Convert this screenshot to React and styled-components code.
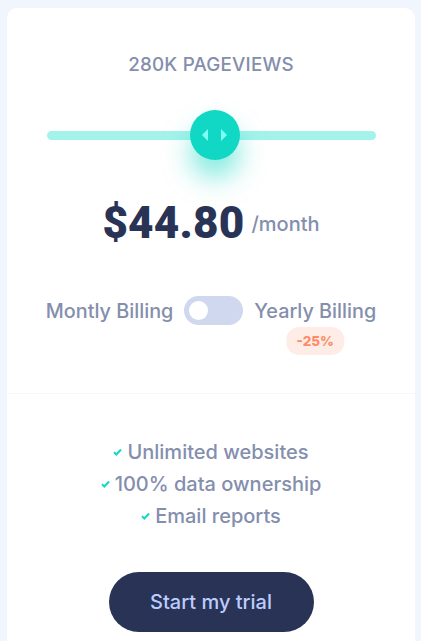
import React, { useState } from "react";
import styled, { createGlobalStyle } from "styled-components";

const GlobalStyle = createGlobalStyle`
  body {
    margin: 0;
    background: #f1f5fe;
    font-family: "Inter", "Liberation Sans", sans-serif;
  }
`;

const Page = styled.div`
  padding: 8px 6px 0 7px;
  height: 633px;
  overflow: hidden;
`;

const Card = styled.div`
  background: #ffffff;
  border-radius: 10px 10px 0 0;
  height: 700px;
`;

const Top = styled.div`
  display: flex;
  flex-direction: column;
  align-items: center;
  padding-top: 45px;
  height: 340px;
  border-bottom: 1px solid #f5f7fe;
`;

const Views = styled.h2`
  margin: 0;
  font-size: 18.8px;
  font-weight: 500;
  color: #848ead;
  letter-spacing: 0.2px;
`;

const SliderWrap = styled.div`
  position: relative;
  width: 329px;
  height: 50px;
  margin-top: 34px;
  display: flex;
  align-items: center;
`;

const Track = styled.div`
  width: 100%;
  height: 9px;
  border-radius: 5px;
  background: #a4f3eb;
`;

const Thumb = styled.div`
  position: absolute;
  left: ${(p) => p.pos}px;
  top: 0;
  width: 50px;
  height: 50px;
  border-radius: 50%;
  background: #10d8c4;
  box-shadow: 0 18px 26px rgba(16, 216, 196, 0.5);
  display: flex;
  align-items: center;
  justify-content: center;
  gap: 13px;
`;

const Arrow = styled.span`
  width: 0;
  height: 0;
  border-top: 6px solid transparent;
  border-bottom: 6px solid transparent;
  ${(p) =>
    p.dir === "left"
      ? "border-right: 6px solid #80fff3;"
      : "border-left: 6px solid #80fff3;"}
`;

const PriceRow = styled.div`
  display: flex;
  align-items: center;
  gap: 7px;
  margin-top: 37px;
`;

const Price = styled.span`
  font-family: "Roboto", "Inter", sans-serif;
  font-size: 44px;
  font-weight: 900;
  color: #293356;
  letter-spacing: 0.2px;
`;

const Per = styled.span`
  font-size: 20px;
  font-weight: 500;
  color: #848ead;
  margin-top: 2px;
`;

const BillingRow = styled.div`
  display: flex;
  align-items: center;
  gap: 11px;
  margin-top: 47px;
`;

const BillingLabel = styled.span`
  position: relative;
  font-size: 19.8px;
  font-weight: 500;
  color: #848ead;
`;

const Toggle = styled.button`
  width: 59px;
  height: 29px;
  border-radius: 15px;
  border: none;
  padding: 0 0 0 5px;
  background: #cfd8ef;
  display: flex;
  align-items: center;
  justify-content: ${(p) => (p.on ? "flex-end" : "flex-start")};
  cursor: pointer;
`;

const Knob = styled.span`
  width: 19px;
  height: 19px;
  border-radius: 50%;
  background: #ffffff;
`;

const Badge = styled.span`
  position: absolute;
  left: 50%;
  top: 28px;
  transform: translateX(-50%);
  padding: 6px 10px;
  border-radius: 13px;
  background: #feece7;
  color: #ff8c66;
  font-size: 13.5px;
  font-weight: 800;
  white-space: nowrap;
`;

const Bottom = styled.div`
  display: flex;
  flex-direction: column;
  align-items: center;
  padding-top: 42px;
`;

const Features = styled.ul`
  list-style: none;
  margin: 0;
  padding: 0;
  display: flex;
  flex-direction: column;
  align-items: center;
`;

const Feature = styled.li`
  display: flex;
  align-items: center;
  gap: 5px;
  font-size: 20px;
  font-weight: 500;
  line-height: 32px;
  color: #848ead;
`;

const TrialButton = styled.button`
  margin-top: 40px;
  width: 205px;
  height: 60px;
  border-radius: 30px;
  border: none;
  background: #293356;
  color: #bdccff;
  font-family: inherit;
  font-size: 20px;
  font-weight: 500;
  cursor: pointer;
`;

const Check = () => (
  <svg width="9" height="8" viewBox="0 0 9 8">
    <path d="M1 4.2l2.3 2.3L8 1.5" fill="none" stroke="#10d8c4" strokeWidth="2" />
  </svg>
);

export default function App() {
  const [yearly, setYearly] = useState(false);

  return (
    <Page>
      <GlobalStyle />
      <Card>
        <Top>
          <Views>280K PAGEVIEWS</Views>
          <SliderWrap>
            <Track />
            <Thumb pos={143}>
              <Arrow dir="left" />
              <Arrow dir="right" />
            </Thumb>
          </SliderWrap>
          <PriceRow>
            <Price>$44.80</Price>
            <Per>/month</Per>
          </PriceRow>
          <BillingRow>
            <BillingLabel>Montly Billing</BillingLabel>
            <Toggle on={yearly} onClick={() => setYearly(!yearly)}>
              <Knob />
            </Toggle>
            <BillingLabel>
              Yearly Billing
              <Badge>-25%</Badge>
            </BillingLabel>
          </BillingRow>
        </Top>
        <Bottom>
          <Features>
            <Feature><Check />Unlimited websites</Feature>
            <Feature><Check />100% data ownership</Feature>
            <Feature><Check />Email reports</Feature>
          </Features>
          <TrialButton>Start my trial</TrialButton>
        </Bottom>
      </Card>
    </Page>
  );
}
